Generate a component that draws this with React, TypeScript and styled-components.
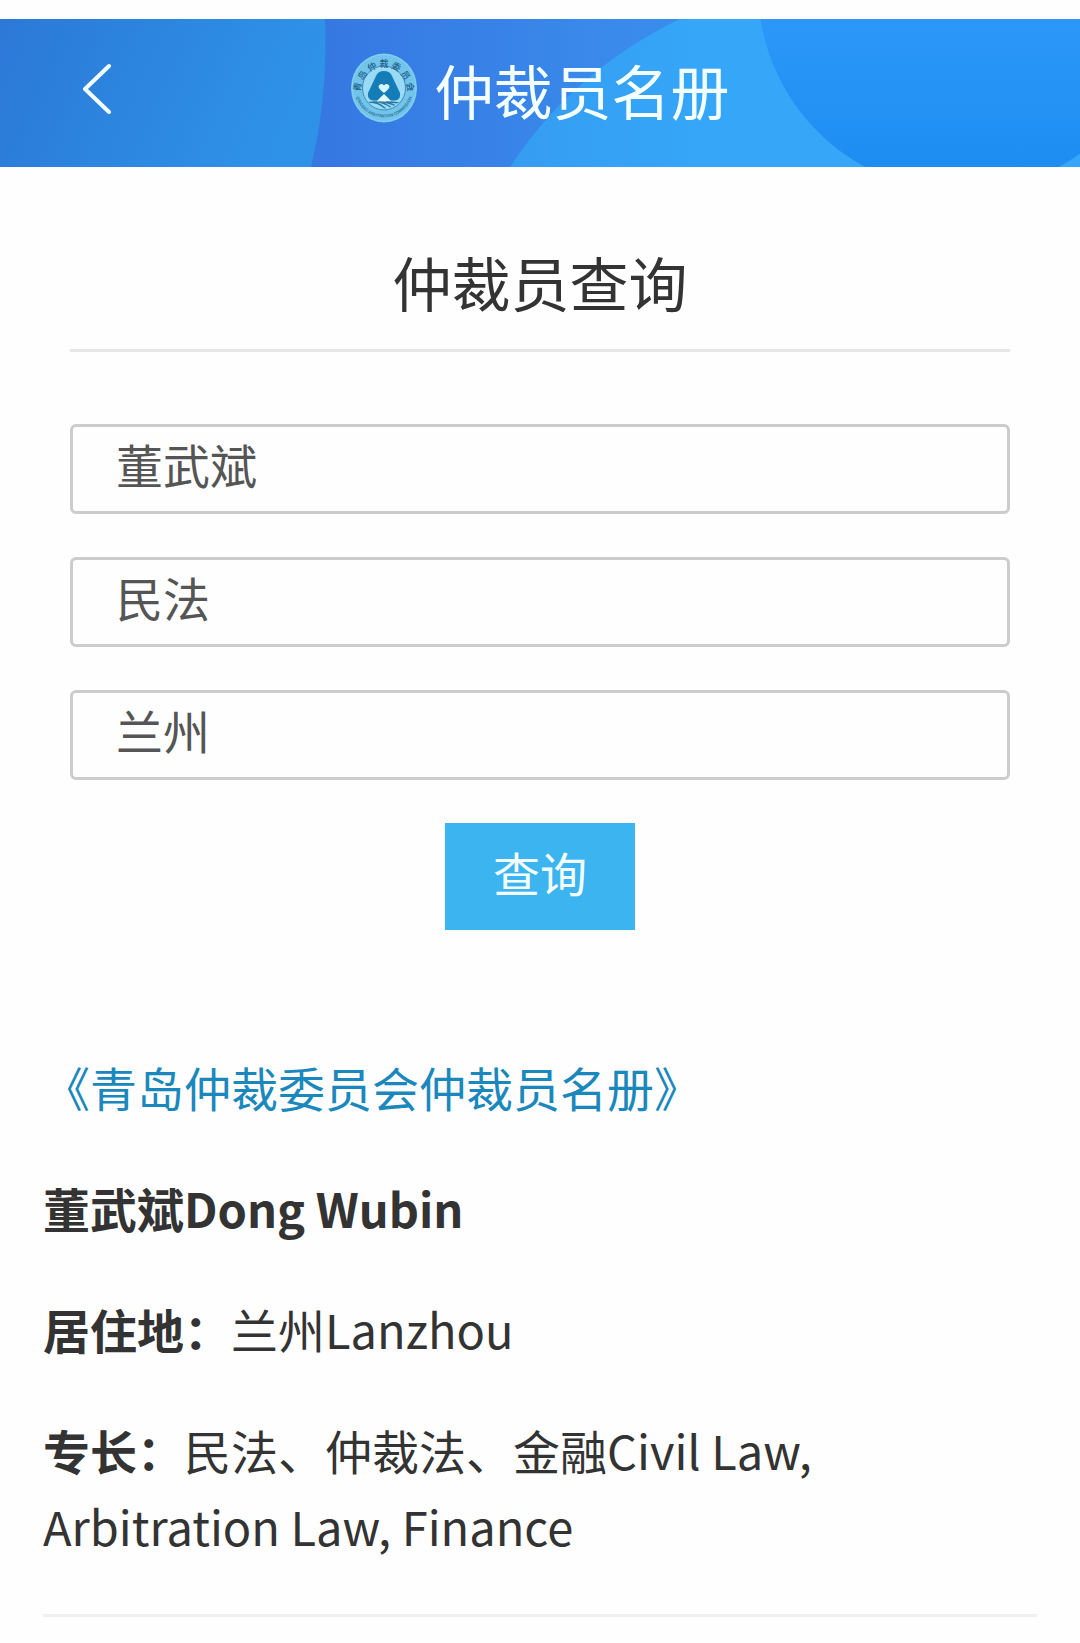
import React, { useState } from "react";
import styled, { createGlobalStyle } from "styled-components";

const GlobalStyle = createGlobalStyle`
  *, *::before, *::after { box-sizing: border-box; }
  body {
    margin: 0;
    background: #fefefe;
    color: #333;
    font-family: "Noto Sans CJK SC", sans-serif;
    font-size: 47px;
    line-height: 76px;
  }
`;

const Page = styled.div`
  padding-top: 19px;
`;

const Header = styled.header`
  position: relative;
  display: grid;
  grid-template-columns: 1fr auto 1fr;
  align-items: center;
  height: 148px;
  padding: 0 71px 11px;
  overflow: hidden;
`;

const HeaderArt = styled.svg`
  position: absolute;
  inset: 0;
  width: 100%;
  height: 100%;
`;

const BackButton = styled.button`
  position: relative;
  justify-self: start;
  display: flex;
  padding: 8px;
  border: 0;
  background: none;
  cursor: pointer;
`;

const Brand = styled.div`
  position: relative;
  display: flex;
  align-items: center;
  gap: 16px;
`;

const BrandName = styled.h1`
  margin: 0;
  padding-top: 4px;
  color: #f4ffff;
  font-size: 59px;
  font-weight: 400;
  line-height: 80px;
`;

const Search = styled.form`
  display: flex;
  flex-direction: column;
  align-items: center;
  gap: 43px;
  padding: 73px 70px 0;
`;

const SearchTitle = styled.h2`
  align-self: stretch;
  margin: 0 0 29px;
  padding-bottom: 25px;
  border-bottom: 3px solid #e6e6e6;
  font-size: 59px;
  font-weight: 400;
  line-height: 84px;
  text-align: center;
`;

const Field = styled.input`
  display: block;
  width: 100%;
  height: 90px;
  padding: 0 43px 12px;
  border: 3px solid #ccc;
  border-radius: 6px;
  outline: 0;
  background: #fefefe;
  color: #555;
  font: inherit;
`;

const SubmitButton = styled.button`
  padding: 11px 48px 20px;
  border: 0;
  background: #3cb4f0;
  color: #f4ffff;
  font: inherit;
  cursor: pointer;
`;

const Results = styled.main`
  display: flex;
  flex-direction: column;
  gap: 45px;
  margin: 119px 43px 0;
  padding-bottom: 50px;
  border-bottom: 3px solid #f0f0f0;
`;

const RosterLink = styled.a`
  align-self: start;
  color: #1a88bd;
  text-decoration: none;
`;

const Name = styled.h3`
  margin: 0;
  font-size: 47px;
  font-weight: 700;
`;

const Detail = styled.p`
  margin: 0;
`;

const Term = styled.strong`
  font-weight: 700;
`;

function Backdrop() {
  return (
    <HeaderArt viewBox="0 19 1080 148" preserveAspectRatio="xMidYMid slice" aria-hidden="true">
      <defs>
        <linearGradient id="left" x1="0" y1="0" x2="1" y2="0.2">
          <stop offset="0" stopColor="#2c78d8" />
          <stop offset="0.5" stopColor="#2c86df" />
          <stop offset="1" stopColor="#2f92e9" />
        </linearGradient>
        <linearGradient id="middle" x1="0" y1="0" x2="1" y2="0">
          <stop offset="0.3" stopColor="#3678e2" />
          <stop offset="0.6" stopColor="#3a8cec" />
        </linearGradient>
        <linearGradient id="light" gradientUnits="userSpaceOnUse" x1="511" y1="0" x2="700" y2="0">
          <stop offset="0" stopColor="#359df1" />
          <stop offset="1" stopColor="#35a6f8" />
        </linearGradient>
        <linearGradient id="right" gradientUnits="userSpaceOnUse" x1="0" y1="19" x2="0" y2="166">
          <stop offset="0" stopColor="#2b98f9" />
          <stop offset="1" stopColor="#1e8df2" />
        </linearGradient>
      </defs>
      <rect y="19" width="1080" height="148" fill="url(#middle)" />
      <path d="M0 19H325Q328 96 311 167H0Z" fill="url(#left)" />
      <path d="M510 167Q574 70 680 19H1080V167Z" fill="url(#light)" />
      <circle cx="962" cy="-12.6" r="204" fill="url(#right)" />
    </HeaderArt>
  );
}

function BackIcon() {
  return (
    <svg width="36" height="52" viewBox="0 0 36 52" aria-hidden="true">
      <path d="M30 4L6 27L30 50" fill="none" stroke="#f4ffff" strokeWidth="4" strokeLinecap="round" strokeLinejoin="round" />
    </svg>
  );
}

function Emblem() {
  return (
    <svg width="68" height="70" viewBox="-34 -35 68 70" role="img" aria-label="青岛仲裁委员会">
      <defs>
        <path id="upper" d="M-23.500 4A23.500 25 0 1 1 23.500 4" />
        <path id="lower" d="M-29 5A29.500 30 0 0 0 29 5" />
        <clipPath id="disc"><circle r="20.5" /></clipPath>
      </defs>
      <ellipse rx="33" ry="34.5" fill="#72c4ea" />
      <ellipse rx="32" ry="33.5" fill="none" stroke="#8ad2f0" strokeWidth="1" />
      <ellipse rx="21.5" ry="22" fill="#9bdaf4" stroke="#3a8fbd" strokeWidth="1" />
      <path d="M0-17Q6-17 8-12L16 5Q17 12 11 12.500H6L2 8H-2L-6 12.500H-11Q-17 12-16 5L-8-12Q-6-17 0-17Z" fill="#147db8" />
      <path d="M0 6L-7 13Q0 15 7 13Z" fill="#e2faff" />
      <path d="M0 5Q-5.500 1-5.500-2Q-3-5.500 0-2.500Q3-5.500 5.500-2Q5.500 1 0 5Z" fill="#d5f6ff" />
      <g clipPath="url(#disc)" fill="none" stroke="#2d789f" strokeWidth="1.400">
        <path d="M-17 15Q-8 12 2 21M-11 14Q-2 13 8 20M-5 14Q5 14 12 18M2 14Q9 14 16 15" />
      </g>
      <circle cx="-27" cy="1" r="1" fill="#236894" />
      <circle cx="27" cy="1" r="1" fill="#236894" />
      <text fill="#1d5f8c" fontSize="9" fontWeight="500">
        <textPath href="#upper" startOffset="50%" textAnchor="middle">青 岛 仲 裁 委 员 会</textPath>
      </text>
      <text fill="#2d789f" fontSize="4" fontWeight="700">
        <textPath href="#lower" startOffset="50%" textAnchor="middle">QINGDAO ARBITRATION COMMISSION</textPath>
      </text>
    </svg>
  );
}

export default function App() {
  const [query, setQuery] = useState({ name: "董武斌", field: "民法", city: "兰州" });
  const update = (key: keyof typeof query) => (event: React.ChangeEvent<HTMLInputElement>) =>
    setQuery({ ...query, [key]: event.target.value });

  return (
    <Page>
      <GlobalStyle />
      <Header>
        <Backdrop />
        <BackButton type="button" aria-label="返回">
          <BackIcon />
        </BackButton>
        <Brand>
          <Emblem />
          <BrandName>仲裁员名册</BrandName>
        </Brand>
      </Header>
      <Search onSubmit={(event) => event.preventDefault()}>
        <SearchTitle>仲裁员查询</SearchTitle>
        <Field aria-label="姓名" value={query.name} onChange={update("name")} />
        <Field aria-label="专长" value={query.field} onChange={update("field")} />
        <Field aria-label="居住地" value={query.city} onChange={update("city")} />
        <SubmitButton type="submit">查询</SubmitButton>
      </Search>
      <Results>
        <RosterLink href="#roster">《青岛仲裁委员会仲裁员名册》</RosterLink>
        <Name>董武斌Dong Wubin</Name>
        <Detail>
          <Term>居住地：</Term>兰州Lanzhou
        </Detail>
        <Detail>
          <Term>专长：</Term>民法、仲裁法、金融Civil Law, Arbitration Law, Finance
        </Detail>
      </Results>
    </Page>
  );
}
